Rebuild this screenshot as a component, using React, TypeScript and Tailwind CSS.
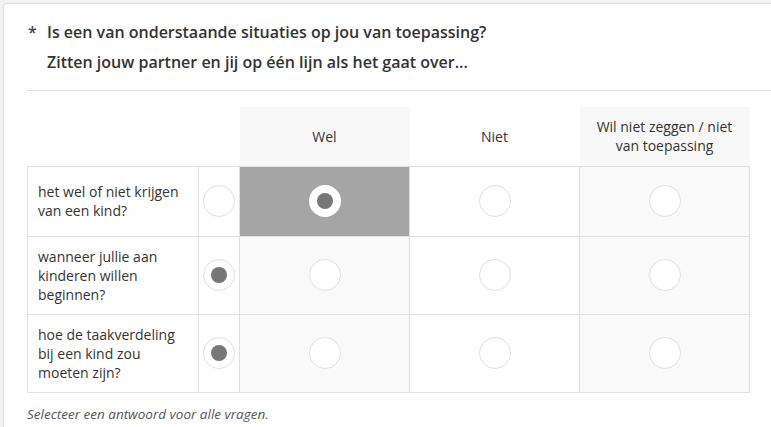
import React from 'react';

const rows = [
  { label: 'het wel of niet krijgen van een kind?', side: false, pick: 0, h: 'h-[70px]' },
  { label: 'wanneer jullie aan kinderen willen beginnen?', side: true, pick: -1, h: 'h-[78px]' },
  { label: 'hoe de taakverdeling bij een kind zou moeten zijn?', side: true, pick: -1, h: 'h-[78px]' },
];

const cols = ['Wel', 'Niet', 'Wil niet zeggen / niet van toepassing'];

function Radio({ checked, onDark }: { checked?: boolean; onDark?: boolean }) {
  return (
    <div
      className={`mx-auto flex h-8 w-8 items-center justify-center rounded-full bg-white ${
        onDark ? '' : 'border border-[#e0e0e0]'
      }`}
    >
      {checked && <div className="h-4 w-4 rounded-full bg-[#777777]" />}
    </div>
  );
}

export default function App() {
  return (
    <div className="h-[427px] w-[771px] overflow-hidden bg-[#f3f3f5] pl-[3px] pt-[3px] font-['Open_Sans',sans-serif] text-[#333]">
      <div className="h-[460px] w-[820px] rounded-tl-[4px] border border-[#dcdce4] bg-white pl-[23px]">
        {/* Question header */}
        <div className="pt-[15px]">
          <div className="flex text-[16px] font-semibold leading-[26px]">
            <span className="w-[20px] pl-[1px] text-[#444]">*</span>
            <span>Is een van onderstaande situaties op jou van toepassing?</span>
          </div>
          <div className="mt-[4px] pl-[20px] text-[16px] font-semibold leading-[26px]">
            Zitten jouw partner en jij op één lijn als het gaat over...
          </div>
        </div>
        <div className="mt-[15px] h-px bg-[#dcdce6]" />

        {/* Matrix */}
        <table className="mt-[16px] w-[722px] table-fixed border-collapse text-[14px] leading-[19px]">
          <colgroup>
            <col className="w-[171px]" />
            <col className="w-[41px]" />
            <col className="w-[170px]" />
            <col className="w-[170px]" />
            <col className="w-[170px]" />
          </colgroup>
          <thead>
            <tr className="h-[59px]">
              <th />
              <th />
              {cols.map((c, i) => (
                <th
                  key={c}
                  className={`px-[14px] text-center font-normal ${i === 1 ? 'bg-white' : 'bg-[#f8f8f8]'}`}
                >
                  {c}
                </th>
              ))}
            </tr>
          </thead>
          <tbody>
            {rows.map((r) => (
              <tr key={r.label} className={r.h}>
                <td className="border border-[#e0e0e0] pl-[10px] pr-[8px] align-middle">{r.label}</td>
                <td className="border border-[#e0e0e0] align-middle">
                  <Radio checked={r.side} />
                </td>
                {cols.map((c, i) => {
                  const sel = r.pick === i;
                  return (
                    <td
                      key={c}
                      className={`border border-[#e0e0e0] align-middle ${
                        sel ? 'bg-[#a5a5a5]' : i === 1 ? 'bg-white' : 'bg-[#f9f9f9]'
                      }`}
                    >
                      <Radio checked={sel} onDark={sel} />
                    </td>
                  );
                })}
              </tr>
            ))}
          </tbody>
        </table>

        <p className="mt-[11px] text-[13.5px] leading-[20px] italic text-[#555]">
          Selecteer een antwoord voor alle vragen.
        </p>
      </div>
    </div>
  );
}
